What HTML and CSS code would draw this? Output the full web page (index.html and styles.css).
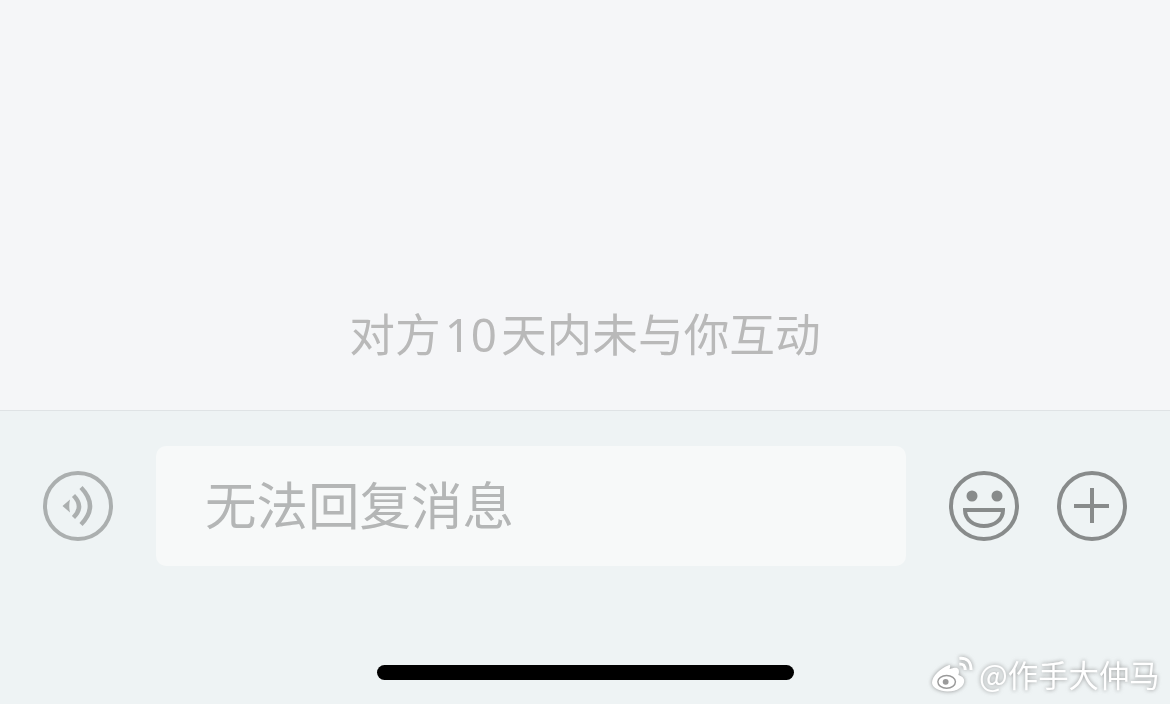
FILE: index.html
```html
<!DOCTYPE html>
<html lang="zh-CN">
<head>
<meta charset="utf-8">
<title>聊天</title>
<link rel="stylesheet" href="styles.css">
</head>
<body>
<main class="page">
  <section class="messages">
    <p class="notice">对方<span class="num">10</span>天内未与你互动</p>
  </section>
  <footer class="composer">
    <div class="row">
      <svg class="icon voice" viewBox="0 0 70 70" aria-hidden="true">
        <circle cx="35" cy="35" r="33"/>
        <path class="fill" d="M19.5 35 L27 28.5 Q25.5 35 27 41.5 Z"/>
        <path class="arc" d="M30.5 24.5 Q41.5 35.5 30.5 46.5"/>
        <path class="arc" d="M38 16.5 Q56 35 38 53.5"/>
      </svg>
      <div class="input"><span class="placeholder">无法回复消息</span></div>
      <div class="actions">
        <svg class="icon dark" viewBox="0 0 70 70" aria-hidden="true">
          <circle cx="35" cy="35" r="33"/>
          <circle class="fill" cx="23" cy="25" r="5.5"/>
          <circle class="fill" cx="48" cy="25" r="5.5"/>
          <path d="M16 39 H54 C54 49 45 55 35 55 C25 55 16 49 16 39 Z"/>
        </svg>
        <svg class="icon dark" viewBox="0 0 70 70" aria-hidden="true">
          <circle cx="35" cy="35" r="33"/>
          <path d="M17 35 H52 M35 17 V52"/>
        </svg>
      </div>
    </div>
    <div class="home-bar"></div>
  </footer>
  <div class="watermark">
    <svg class="weibo" viewBox="0 0 42 36" aria-hidden="true">
      <path class="logo-body" d="M17 9 C9 12 0 20 0 27 C0 32 8 36 16 36 C26 36 33 31 33 25 C33 21 29 20 27 19 C28 16 28 13 26 12 C24 11 21 12 18 13 C19 10 19 8 17 9 Z"/>
      <ellipse class="logo-eye" cx="15" cy="26" rx="9" ry="6.5"/>
      <circle class="logo-pupil" cx="14" cy="26" r="3"/>
      <path class="logo-wave" d="M28 2 Q40 1 40 14 M28 8 Q34 7 34 14"/>
    </svg>
    <span class="handle">@作手大仲马</span>
  </div>
</main>
</body>
</html>
```
FILE: styles.css
```css
* { box-sizing: border-box; }
html, body { margin: 0; padding: 0; }
body {
  width: 1170px;
  height: 704px;
  overflow: hidden;
  font-family: "Noto Sans CJK SC", "Noto Sans", sans-serif;
}
.page {
  position: relative;
  display: flex;
  flex-direction: column;
  height: 704px;
  background: #eef3f4;
}
.messages {
  height: 411px;
  display: flex;
  align-items: flex-end;
  justify-content: center;
  padding-bottom: 44px;
  background: #f5f6f8;
  border-bottom: 1px solid #dfe3e5;
}
.notice {
  margin: 0;
  font-size: 45.7px;
  line-height: 64px;
  font-weight: 400;
  color: #b9b9b9;
  white-space: nowrap;
  opacity: .99;
}
.num {
  margin: 0 4px;
  font-family: "Noto Sans", sans-serif;
  font-weight: 400;
}
.composer {
  flex: 1;
  display: flex;
  flex-direction: column;
  align-items: flex-start;
  padding-top: 35px;
}
.row {
  display: flex;
  align-items: center;
  width: 100%;
  padding-left: 43px;
}
.icon {
  width: 70px;
  height: 70px;
  flex: none;
  fill: none;
  stroke-width: 4;
}
.voice { stroke: #abafaf; }
.voice .fill { fill: #abafaf; stroke: none; }
.voice .arc { stroke-width: 4.4; }
.dark { stroke: #888b8b; }
.dark .fill { fill: #888b8b; stroke: none; }
.input {
  width: 750px;
  height: 120px;
  margin-left: 43px;
  padding: 0 0 6px 49px;
  display: flex;
  align-items: center;
  background: #f7f9f9;
  border-radius: 10px;
}
.placeholder {
  font-size: 51.5px;
  line-height: 72px;
  font-weight: 400;
  color: #b4b6b6;
  white-space: nowrap;
  opacity: .99;
}
.actions {
  display: flex;
  gap: 38px;
  margin-left: 43px;
}
.home-bar {
  width: 417px;
  height: 15px;
  margin: 99px 0 0 377px;
  background: #000;
  border-radius: 8px;
}
.watermark {
  position: absolute;
  left: 932px;
  top: 656px;
  display: flex;
  align-items: center;
  gap: 6px;
  color: #fff;
  filter: drop-shadow(0 0 2px rgba(110, 110, 110, .75));
}
.weibo { width: 41px; height: 36px; flex: none; }
.logo-body { fill: #fff; }
.logo-eye { fill: #fff; stroke: #9a9a9a; stroke-width: 1.5; }
.logo-pupil { fill: #9a9a9a; }
.logo-wave { fill: none; stroke: #fff; stroke-width: 3; }
.handle {
  font-size: 30.4px;
  line-height: 36px;
  margin-top: -1px;
  white-space: nowrap;
}
```
